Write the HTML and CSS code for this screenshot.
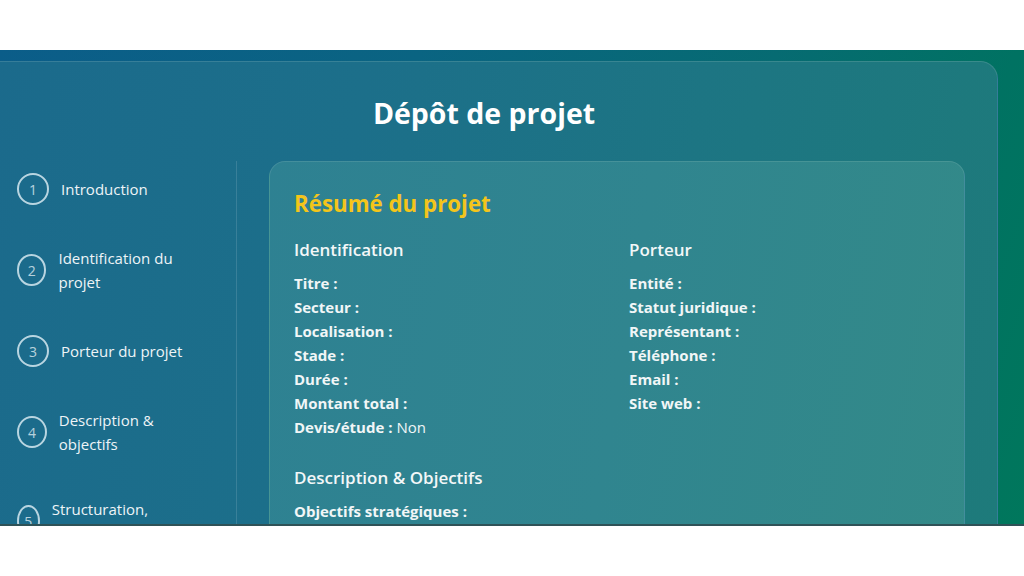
FILE: index.html
```html
<!DOCTYPE html>
<html lang="fr">
<head>
<meta charset="utf-8">
<title>Dépôt de projet</title>
<link rel="stylesheet" href="styles.css">
</head>
<body>
<div class="frame">
  <div class="panel">
    <h1 class="title">Dépôt de projet</h1>
    <div class="body">
      <nav class="steps">
        <div class="step"><span class="num">1</span><span class="label">Introduction</span></div>
        <div class="step"><span class="num">2</span><span class="label">Identification du projet</span></div>
        <div class="step"><span class="num">3</span><span class="label">Porteur du projet</span></div>
        <div class="step"><span class="num">4</span><span class="label">Description &amp; objectifs</span></div>
        <div class="step"><span class="num">5</span><span class="label">Structuration, montage financier</span></div>
        <div class="step"><span class="num">6</span><span class="label">Récapitulatif</span></div>
      </nav>
      <section class="card">
        <h2 class="card-title">Résumé du projet</h2>
        <div class="cols">
          <div class="col">
            <h3 class="sec-title">Identification</h3>
            <p class="row"><b>Titre :</b></p>
            <p class="row"><b>Secteur :</b></p>
            <p class="row"><b>Localisation :</b></p>
            <p class="row"><b>Stade :</b></p>
            <p class="row"><b>Durée :</b></p>
            <p class="row"><b>Montant total :</b></p>
            <p class="row"><b>Devis/étude :</b> Non</p>
          </div>
          <div class="col">
            <h3 class="sec-title">Porteur</h3>
            <p class="row"><b>Entité :</b></p>
            <p class="row"><b>Statut juridique :</b></p>
            <p class="row"><b>Représentant :</b></p>
            <p class="row"><b>Téléphone :</b></p>
            <p class="row"><b>Email :</b></p>
            <p class="row"><b>Site web :</b></p>
          </div>
        </div>
        <div class="section">
          <h3 class="sec-title">Description &amp; Objectifs</h3>
          <p class="row"><b>Objectifs stratégiques :</b></p>
          <p class="row"><b>Résultats attendus :</b></p>
          <p class="row"><b>Impact :</b></p>
        </div>
      </section>
    </div>
  </div>
</div>
</body>
</html>
```
FILE: styles.css
```css
html, body {
  margin: 0;
  padding: 0;
  background: #ffffff;
}
body {
  font-family: "Open Sans", "Lato", sans-serif;
  color: #f1f6f7;
}
.frame {
  margin-top: 50px;
  height: 474px;
  overflow: hidden;
  background: linear-gradient(110deg, #0b5d89 0%, #0a6482 35%, #066b72 65%, #007262 85%, #00775c 100%);
  border-bottom: 2px solid #2f5257;
}
.panel {
  margin: 11px 0 0 -30px;
  width: 1028px;
  box-sizing: border-box;
  border: 1px solid rgba(255, 255, 255, 0.12);
  border-radius: 18px;
  background: linear-gradient(100deg, #1b6a8c 0%, #1c6f8a 35%, #1d7682 70%, #1e7b7a 100%);
  min-height: 600px;
}
.title {
  margin: 0;
  padding-top: 33px;
  font-size: 28.5px;
  line-height: 36px;
  font-weight: 700;
  text-align: center;
  color: #ffffff;
  margin-bottom: 30px;
}
.body {
  display: flex;
  padding-right: 32px;
  align-items: stretch;
}
.steps {
  width: 266px;
  box-sizing: border-box;
  padding: 12px 32px 0 46px;
  border-right: 1px solid rgba(255, 255, 255, 0.13);
  display: flex;
  flex-direction: column;
  gap: 41px;
  min-height: 420px;
}
.step {
  display: flex;
  align-items: center;
  gap: 12px;
}
.num {
  width: 32px;
  height: 32px;
  box-sizing: border-box;
  border: 2px solid rgba(225, 240, 246, 0.8);
  border-radius: 50%;
  display: flex;
  align-items: center;
  justify-content: center;
  font-size: 14px;
  font-weight: 400;
  color: rgba(225, 238, 243, 0.8);
}
.label {
  font-size: 15px;
  line-height: 24px;
  font-weight: 500;
  color: #eef4f7;
}
.card {
  flex: 1;
  margin-left: 32px;
  box-sizing: border-box;
  padding: 27px 24px 24px;
  border: 1px solid rgba(255, 255, 255, 0.1);
  border-radius: 16px;
  background: linear-gradient(100deg, #2e8192 0%, #30858f 50%, #338a88 100%);
}
.card-title {
  margin: 0 0 19px;
  font-size: 22.3px;
  line-height: 30px;
  font-weight: 700;
  color: #f4c51b;
}
.cols {
  display: grid;
  grid-template-columns: 1fr 1fr;
  column-gap: 24px;
}
.sec-title {
  margin: 0 0 9px;
  font-size: 17px;
  line-height: 24px;
  font-weight: 600;
  color: #f3f7f8;
}
.row {
  margin: 0;
  font-size: 15px;
  line-height: 24px;
  color: #f1f6f7;
}
.row b {
  font-weight: 700;
}
.section {
  margin-top: 27px;
}
```
